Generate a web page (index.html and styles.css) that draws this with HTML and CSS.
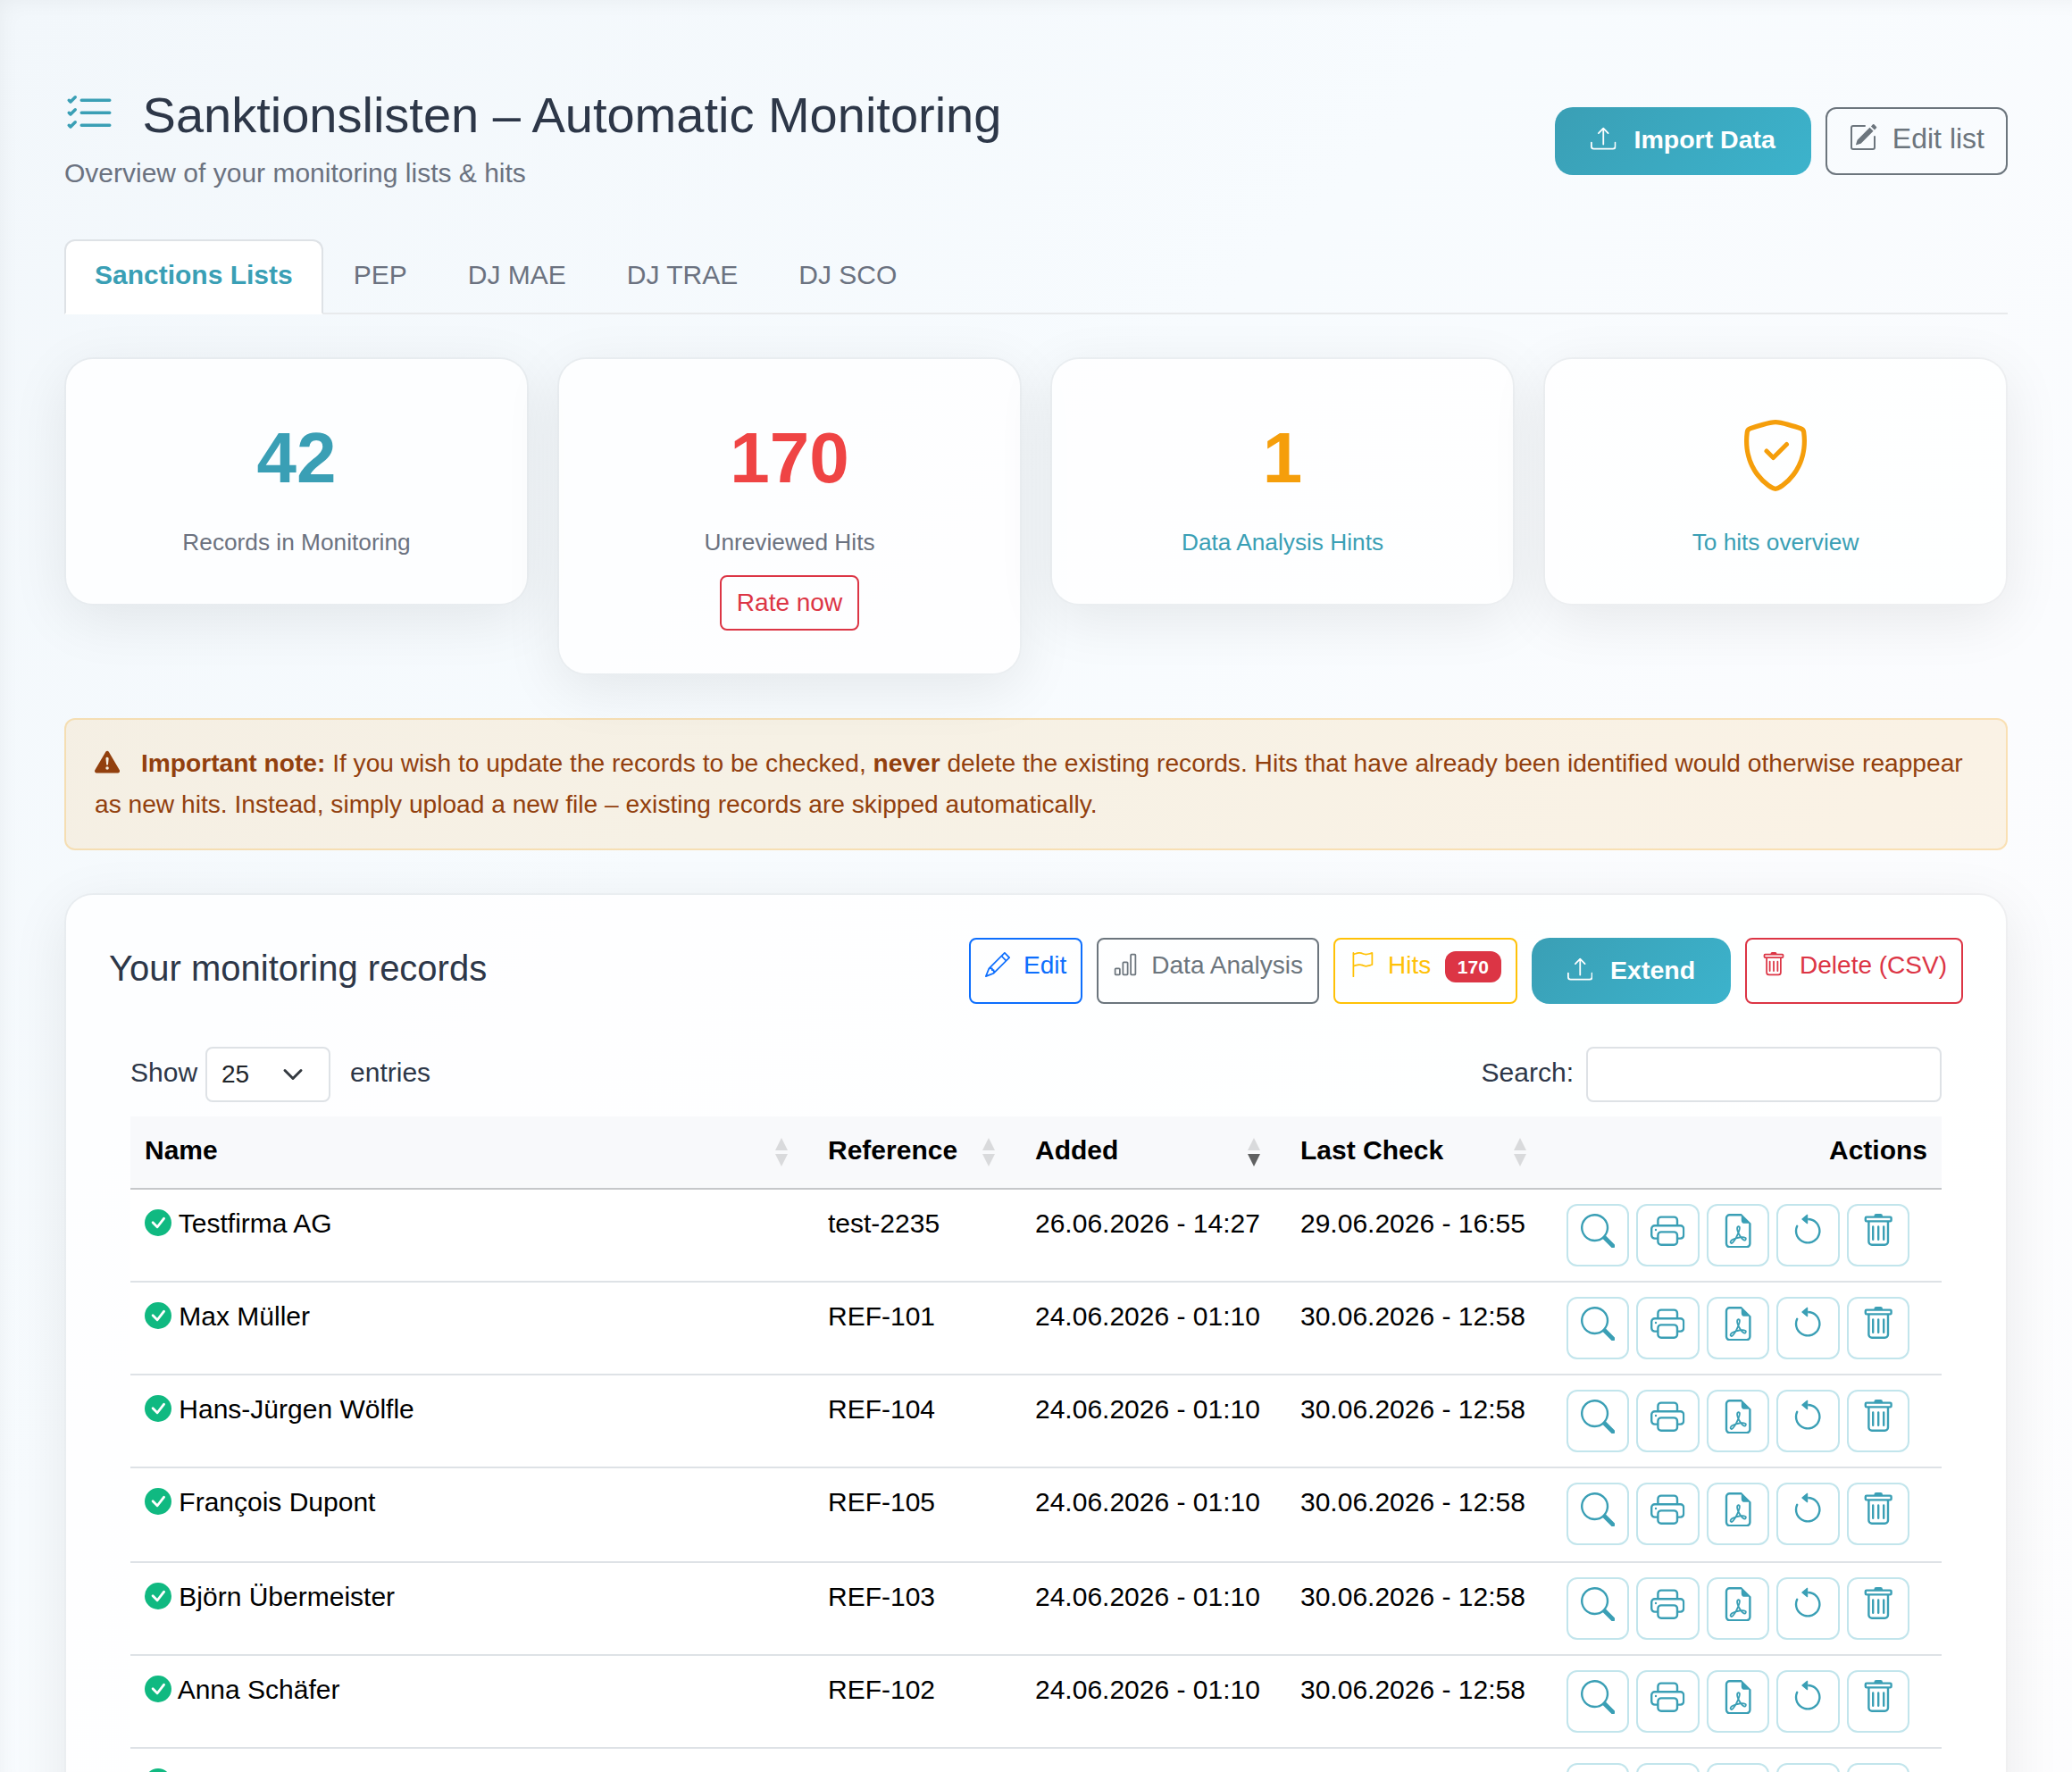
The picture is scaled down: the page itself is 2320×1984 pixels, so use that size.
FILE: index.html
```html
<!DOCTYPE html>
<html lang="en">
<head>
  <meta charset="UTF-8">
  <meta name="viewport" content="width=device-width, initial-scale=1">
  <title>Sanktionslisten – Automatic Monitoring</title>
  <link rel="stylesheet" href="styles.css">
</head>
<body>

<svg class="sprite" xmlns="http://www.w3.org/2000/svg">
  <symbol id="list-check" viewBox="0 0 16 16"><path fill-rule="evenodd" d="M5 11.5a.5.5 0 0 1 .5-.5h9a.5.5 0 0 1 0 1h-9a.5.5 0 0 1-.5-.5m0-4a.5.5 0 0 1 .5-.5h9a.5.5 0 0 1 0 1h-9a.5.5 0 0 1-.5-.5m0-4a.5.5 0 0 1 .5-.5h9a.5.5 0 0 1 0 1h-9a.5.5 0 0 1-.5-.5M3.854 2.146a.5.5 0 0 1 0 .708l-1.5 1.5a.5.5 0 0 1-.708 0l-.5-.5a.5.5 0 1 1 .708-.708L2 3.293l1.146-1.147a.5.5 0 0 1 .708 0m0 4a.5.5 0 0 1 0 .708l-1.5 1.5a.5.5 0 0 1-.708 0l-.5-.5a.5.5 0 1 1 .708-.708L2 7.293l1.146-1.147a.5.5 0 0 1 .708 0m0 4a.5.5 0 0 1 0 .708l-1.5 1.5a.5.5 0 0 1-.708 0l-.5-.5a.5.5 0 0 1 .708-.708l.146.147 1.146-1.147a.5.5 0 0 1 .708 0"/></symbol>
  <symbol id="upload" viewBox="0 0 16 16"><path d="M.5 9.9a.5.5 0 0 1 .5.5v2.5a1 1 0 0 0 1 1h12a1 1 0 0 0 1-1v-2.5a.5.5 0 0 1 1 0v2.5a2 2 0 0 1-2 2H2a2 2 0 0 1-2-2v-2.5a.5.5 0 0 1 .5-.5"/><path d="M7.646 1.146a.5.5 0 0 1 .708 0l3 3a.5.5 0 0 1-.708.708L8.5 2.707V11.5a.5.5 0 0 1-1 0V2.707L5.354 4.854a.5.5 0 1 1-.708-.708z"/></symbol>
  <symbol id="pencil-square" viewBox="0 0 16 16"><path d="M15.502 1.94a.5.5 0 0 1 0 .706L14.459 3.69l-2-2L13.502.646a.5.5 0 0 1 .707 0l1.293 1.293zm-1.75 2.456-2-2L4.939 9.21a.5.5 0 0 0-.121.196l-.805 2.414a.25.25 0 0 0 .316.316l2.414-.805a.5.5 0 0 0 .196-.12l6.813-6.814z"/><path fill-rule="evenodd" d="M1 13.5A1.5 1.5 0 0 0 2.5 15h11a1.5 1.5 0 0 0 1.5-1.5v-6a.5.5 0 0 0-1 0v6a.5.5 0 0 1-.5.5h-11a.5.5 0 0 1-.5-.5v-11a.5.5 0 0 1 .5-.5H9a.5.5 0 0 0 0-1H2.5A1.5 1.5 0 0 0 1 2.5z"/></symbol>
  <symbol id="pencil" viewBox="0 0 16 16"><path d="M12.146.146a.5.5 0 0 1 .708 0l3 3a.5.5 0 0 1 0 .708l-10 10a.5.5 0 0 1-.168.11l-5 2a.5.5 0 0 1-.65-.65l2-5a.5.5 0 0 1 .11-.168zM11.207 2.5 13.5 4.793 14.793 3.5 12.5 1.207zm1.586 3L10.5 3.207 4 9.707V10h.5a.5.5 0 0 1 .5.5v.5h.5a.5.5 0 0 1 .5.5v.5h.293zm-9.761 5.175-.106.106-1.528 3.821 3.821-1.528.106-.106A.5.5 0 0 1 5 12.5V12h-.5a.5.5 0 0 1-.5-.5V11h-.5a.5.5 0 0 1-.468-.325"/></symbol>
  <symbol id="bar-chart" viewBox="0 0 16 16"><path d="M4 11H2v3h2zm5-4H7v7h2zm5-5v12h-2V2zm-2-1a1 1 0 0 0-1 1v12a1 1 0 0 0 1 1h2a1 1 0 0 0 1-1V2a1 1 0 0 0-1-1zM6 7a1 1 0 0 1 1-1h2a1 1 0 0 1 1 1v7a1 1 0 0 1-1 1H7a1 1 0 0 1-1-1zm-5 4a1 1 0 0 1 1-1h2a1 1 0 0 1 1 1v3a1 1 0 0 1-1 1H2a1 1 0 0 1-1-1z"/></symbol>
  <symbol id="flag" viewBox="0 0 16 16"><path d="M14.778.085A.5.5 0 0 1 15 .5V8a.5.5 0 0 1-.314.464L14.5 8l.186.464-.003.001-.006.003-.023.009a12 12 0 0 1-.397.15c-.264.095-.631.223-1.047.35-.816.252-1.879.523-2.71.523-.847 0-1.548-.28-2.158-.525l-.028-.01C7.68 8.71 7.14 8.5 6.5 8.5c-.7 0-1.638.23-2.437.477A20 20 0 0 0 3 9.342V15.5a.5.5 0 0 1-1 0V.5a.5.5 0 0 1 1 0v.282c.226-.079.496-.17.79-.26C4.606.272 5.67 0 6.5 0c.84 0 1.524.277 2.121.519l.043.018C9.286.788 9.828 1 10.5 1c.7 0 1.638-.23 2.437-.477a20 20 0 0 0 1.349-.476l.019-.007.004-.002h.001M14 1.221c-.22.078-.48.167-.766.255-.81.252-1.872.523-2.734.523-.886 0-1.592-.286-2.203-.534l-.008-.003C7.662 1.21 7.139 1 6.5 1c-.669 0-1.606.229-2.415.478A21 21 0 0 0 3 1.845v6.433c.22-.078.48-.167.766-.255C4.576 7.77 5.638 7.5 6.5 7.5c.847 0 1.548.28 2.158.525l.028.01C9.32 8.29 9.86 8.5 10.5 8.5c.668 0 1.606-.229 2.415-.478A21 21 0 0 0 14 7.655V1.222z"/></symbol>
  <symbol id="trash" viewBox="0 0 16 16"><path d="M5.5 5.5A.5.5 0 0 1 6 6v6a.5.5 0 0 1-1 0V6a.5.5 0 0 1 .5-.5m2.5 0a.5.5 0 0 1 .5.5v6a.5.5 0 0 1-1 0V6a.5.5 0 0 1 .5-.5m3 .5a.5.5 0 0 0-1 0v6a.5.5 0 0 0 1 0z"/><path d="M14.5 3a1 1 0 0 1-1 1H13v9a2 2 0 0 1-2 2H5a2 2 0 0 1-2-2V4h-.5a1 1 0 0 1-1-1V2a1 1 0 0 1 1-1H6a1 1 0 0 1 1-1h2a1 1 0 0 1 1 1h3.5a1 1 0 0 1 1 1zM4.118 4 4 4.059V13a1 1 0 0 0 1 1h6a1 1 0 0 0 1-1V4.059L11.882 4zM2.5 3h11V2h-11z"/></symbol>
  <symbol id="shield-check" viewBox="0 0 16 16"><path d="M5.338 1.59a61 61 0 0 0-2.837.856.48.48 0 0 0-.328.39c-.554 4.157.726 7.19 2.253 9.188a10.7 10.7 0 0 0 2.287 2.233c.346.244.652.42.893.533q.18.085.293.118a1 1 0 0 0 .101.025 1 1 0 0 0 .1-.025q.114-.034.294-.118c.24-.113.547-.29.893-.533a10.7 10.7 0 0 0 2.287-2.233c1.527-1.997 2.807-5.031 2.253-9.188a.48.48 0 0 0-.328-.39c-.651-.213-1.75-.56-2.837-.855C9.552 1.29 8.531 1.067 8 1.067c-.53 0-1.552.223-2.662.524zM5.072.56C6.157.265 7.31 0 8 0s1.843.265 2.928.56c1.11.3 2.229.655 2.887.87a1.54 1.54 0 0 1 1.044 1.262c.596 4.477-.787 7.795-2.465 9.99a11.8 11.8 0 0 1-2.517 2.453 7 7 0 0 1-1.048.625c-.28.132-.581.24-.829.24s-.548-.108-.829-.24a7 7 0 0 1-1.048-.625 11.8 11.8 0 0 1-2.517-2.453C1.928 10.487.545 7.169 1.141 2.692A1.54 1.54 0 0 1 2.185 1.43 63 63 0 0 1 5.072.56"/><path d="M10.854 5.146a.5.5 0 0 1 0 .708l-3 3a.5.5 0 0 1-.708 0l-1.5-1.5a.5.5 0 1 1 .708-.708L7.5 7.793l2.646-2.647a.5.5 0 0 1 .708 0"/></symbol>
  <symbol id="warning" viewBox="0 0 16 16"><path d="M8.982 1.566a1.13 1.13 0 0 0-1.96 0L.165 13.233c-.457.778.091 1.767.98 1.767h13.713c.889 0 1.438-.99.98-1.767zM8 5c.535 0 .954.462.9.995l-.35 3.507a.552.552 0 0 1-1.1 0L7.1 5.995A.905.905 0 0 1 8 5m.002 6a1 1 0 1 1 0 2 1 1 0 0 1 0-2"/></symbol>
  <symbol id="check-circle" viewBox="0 0 16 16"><path d="M16 8A8 8 0 1 1 0 8a8 8 0 0 1 16 0m-3.97-3.03a.75.75 0 0 0-1.08.022L7.477 9.417 5.384 7.323a.75.75 0 0 0-1.06 1.06L6.97 11.03a.75.75 0 0 0 1.079-.02l3.992-4.99a.75.75 0 0 0-.01-1.05z"/></symbol>
  <symbol id="search" viewBox="0 0 16 16"><path d="M11.742 10.344a6.5 6.5 0 1 0-1.397 1.398h-.001q.044.06.098.115l3.85 3.85a1 1 0 0 0 1.415-1.414l-3.85-3.85a1 1 0 0 0-.115-.1zM12 6.5a5.5 5.5 0 1 1-11 0 5.5 5.5 0 0 1 11 0"/></symbol>
  <symbol id="printer" viewBox="0 0 16 16"><path d="M2.5 8a.5.5 0 1 0 0-1 .5.5 0 0 0 0 1"/><path d="M5 1a2 2 0 0 0-2 2v2H2a2 2 0 0 0-2 2v3a2 2 0 0 0 2 2h1v1a2 2 0 0 0 2 2h6a2 2 0 0 0 2-2v-1h1a2 2 0 0 0 2-2V7a2 2 0 0 0-2-2h-1V3a2 2 0 0 0-2-2zM4 3a1 1 0 0 1 1-1h6a1 1 0 0 1 1 1v2H4zm1 5a2 2 0 0 0-2 2v1H2a1 1 0 0 1-1-1V7a1 1 0 0 1 1-1h12a1 1 0 0 1 1 1v3a1 1 0 0 1-1 1h-1v-1a2 2 0 0 0-2-2zm7 2v3a1 1 0 0 1-1 1H5a1 1 0 0 1-1-1v-3a1 1 0 0 1 1-1h6a1 1 0 0 1 1 1"/></symbol>
  <symbol id="pdf" viewBox="0 0 16 16"><path d="M14 14V4.5L9.5 0H4a2 2 0 0 0-2 2v12a2 2 0 0 0 2 2h8a2 2 0 0 0 2-2M9.5 3A1.5 1.5 0 0 0 11 4.5h2V14a1 1 0 0 1-1 1H4a1 1 0 0 1-1-1V2a1 1 0 0 1 1-1h5.5z"/><path d="M4.603 14.087a.8.8 0 0 1-.438-.42c-.195-.388-.13-.776.08-1.102.198-.307.526-.568.897-.787a7.7 7.7 0 0 1 1.482-.645 20 20 0 0 0 1.062-2.227 7.3 7.3 0 0 1-.43-1.295c-.086-.4-.119-.796-.046-1.136.075-.354.274-.672.65-.823.192-.077.4-.12.602-.077a.7.7 0 0 1 .477.365c.088.164.12.356.127.538.007.188-.012.396-.047.614-.084.51-.27 1.134-.52 1.794a11 11 0 0 0 .98 1.686 5.8 5.8 0 0 1 1.334.05c.364.066.734.195.96.465.12.144.193.32.2.518.007.192-.047.382-.138.563a1.04 1.04 0 0 1-.354.416.86.86 0 0 1-.51.138c-.331-.014-.654-.196-.933-.417a5.7 5.7 0 0 1-.911-.95 11.7 11.7 0 0 0-1.997.406 11.3 11.3 0 0 1-1.02 1.51c-.292.35-.609.656-.927.787a.8.8 0 0 1-.58.029m1.379-1.901q-.25.115-.459.238c-.328.194-.541.383-.647.547-.094.145-.096.25-.04.361q.016.032.026.044l.035-.012c.137-.056.355-.235.635-.572a8 8 0 0 0 .45-.606m1.64-1.33a13 13 0 0 1 1.01-.193 12 12 0 0 1-.51-.858 21 21 0 0 1-.5 1.05zm2.446.45q.226.245.435.41c.24.19.407.253.498.256a.1.1 0 0 0 .07-.015.3.3 0 0 0 .094-.125.44.44 0 0 0 .059-.2.1.1 0 0 0-.026-.063c-.052-.062-.2-.152-.518-.209a4 4 0 0 0-.612-.053zM8.078 7.8a7 7 0 0 0 .2-.828q.046-.282.038-.465a.6.6 0 0 0-.032-.198.5.5 0 0 0-.145.04c-.087.035-.158.106-.196.283-.04.192-.03.469.046.822q.036.167.09.346z"/></symbol>
  <symbol id="reset" viewBox="0 0 16 16"><path fill-rule="evenodd" d="M8 3a5 5 0 1 1-4.546 2.914.5.5 0 0 0-.908-.417A6 6 0 1 0 8 2z"/><path d="M8 4.466V.534a.25.25 0 0 0-.41-.192L5.23 2.308a.25.25 0 0 0 0 .384l2.36 1.966A.25.25 0 0 0 8 4.466"/></symbol>
</svg>

<main class="page">

  <header class="page-header">
    <div>
      <h1><svg class="icon title-icon"><use href="#list-check"/></svg> Sanktionslisten – Automatic Monitoring</h1>
      <p class="subtitle">Overview of your monitoring lists &amp; hits</p>
    </div>
    <div class="btn-row">
      <a class="btn btn-main"><svg class="icon"><use href="#upload"/></svg>Import Data</a>
      <a class="btn btn-edit-list"><svg class="icon"><use href="#pencil-square"/></svg>Edit list</a>
    </div>
  </header>

  <nav class="tabs">
    <a class="tab active">Sanctions Lists</a>
    <a class="tab">PEP</a>
    <a class="tab">DJ MAE</a>
    <a class="tab">DJ TRAE</a>
    <a class="tab">DJ SCO</a>
  </nav>

  <section class="stats">
    <div class="card stat">
      <div class="stat-number teal">42</div>
      <div class="stat-label">Records in Monitoring</div>
    </div>
    <div class="card stat">
      <div class="stat-number red">170</div>
      <div class="stat-label">Unreviewed Hits</div>
      <a class="btn btn-sm btn-red rate-btn">Rate now</a>
    </div>
    <div class="card stat">
      <div class="stat-number amber">1</div>
      <div class="stat-label teal">Data Analysis Hints</div>
    </div>
    <div class="card stat">
      <div class="stat-number amber"><svg class="icon"><use href="#shield-check"/></svg></div>
      <div class="stat-label teal">To hits overview</div>
    </div>
  </section>

  <div class="note">
    <svg class="icon"><use href="#warning"/></svg>
    <strong>Important note:</strong> If you wish to update the records to be checked, <strong>never</strong> delete the existing records. Hits that have already been identified would otherwise reappear as new hits. Instead, simply upload a new file – existing records are skipped automatically.
  </div>

  <section class="card records">
    <div class="records-header">
      <h2>Your monitoring records</h2>
      <div class="btn-row">
        <a class="btn btn-sm btn-blue"><svg class="icon"><use href="#pencil"/></svg>Edit</a>
        <a class="btn btn-sm btn-gray"><svg class="icon"><use href="#bar-chart"/></svg>Data Analysis</a>
        <a class="btn btn-sm btn-yellow"><svg class="icon"><use href="#flag"/></svg>Hits<span class="badge">170</span></a>
        <a class="btn btn-main"><svg class="icon"><use href="#upload"/></svg>Extend</a>
        <a class="btn btn-sm btn-red"><svg class="icon"><use href="#trash"/></svg>Delete (CSV)</a>
      </div>
    </div>

    <div class="table-wrap">
      <div class="table-controls">
        <label class="length">Show
          <span class="select">25<svg class="caret" viewBox="0 0 16 16"><path d="m2 5 6 6 6-6"/></svg></span>
          entries</label>
        <label class="filter">Search: <input type="search"></label>
      </div>

      <table>
        <colgroup>
          <col class="col-name"><col class="col-ref"><col class="col-added"><col class="col-check"><col>
        </colgroup>
        <thead>
          <tr>
            <th><div class="head">Name<span class="sort"></span></div></th>
            <th><div class="head">Reference<span class="sort"></span></div></th>
            <th><div class="head">Added<span class="sort desc"></span></div></th>
            <th><div class="head">Last Check<span class="sort"></span></div></th>
            <th class="right">Actions</th>
          </tr>
        </thead>
        <tbody id="rows"></tbody>
      </table>
    </div>
  </section>

</main>

<script>
  const records = [
    ["Testfirma AG", "test-2235", "26.06.2026 - 14:27", "29.06.2026 - 16:55"],
    ["Max Müller", "REF-101", "24.06.2026 - 01:10", "30.06.2026 - 12:58"],
    ["Hans-Jürgen Wölfle", "REF-104", "24.06.2026 - 01:10", "30.06.2026 - 12:58"],
    ["François Dupont", "REF-105", "24.06.2026 - 01:10", "30.06.2026 - 12:58"],
    ["Björn Übermeister", "REF-103", "24.06.2026 - 01:10", "30.06.2026 - 12:58"],
    ["Anna Schäfer", "REF-102", "24.06.2026 - 01:10", "30.06.2026 - 12:58"],
    ["", "", "", ""]
  ];
  const icon = name => `<svg class="icon"><use href="#${name}"/></svg>`;
  const actions = ["search", "printer", "pdf", "reset", "trash"]
    .map(name => `<a class="action">${icon(name)}</a>`).join("");

  document.getElementById("rows").innerHTML = records.map(([name, ref, added, checked]) => `
    <tr>
      <td><span class="ok">${icon("check-circle")}</span> ${name}</td>
      <td>${ref}</td>
      <td>${added}</td>
      <td>${checked}</td>
      <td><div class="actions">${actions}</div></td>
    </tr>`).join("");
</script>

</body>
</html>
```
FILE: styles.css
```css
* {
  box-sizing: border-box;
}

body {
  margin: 0;
  height: 100vh;
  overflow: hidden;
  font-family: "Liberation Sans", Arial, sans-serif;
  font-size: 30px;
  line-height: 1.5;
  color: #2d3748;
  background: linear-gradient(135deg, #f2f7fb 0%, #f7fbfe 40%, #fbfcfe 70%, #fdfdfe 100%);
}

.sprite {
  display: none;
}

.icon {
  width: 1em;
  height: 1em;
  fill: currentColor;
  vertical-align: -.125em;
}

.page {
  height: 100vh;
  padding: 95px 72px 0;
  overflow: hidden;
  box-shadow: inset 12px 12px 24px -12px rgba(0, 0, 0, .05);
}

h1, h2, p {
  margin: 0;
  font-weight: normal;
}

.page-header {
  display: flex;
  justify-content: space-between;
  align-items: flex-start;
  height: 126px;
}

.page-header .btn-row {
  margin-top: 25px;
}

h1 {
  font-size: 56px;
  line-height: 67px;
}

.title-icon {
  margin-right: 16px;
  vertical-align: -8px;
  color: #3a9fb5;
}

.subtitle {
  margin-top: 9px;
  color: #6b7280;
}

.btn-row {
  display: flex;
  gap: 16px;
}

.btn {
  display: inline-block;
  border: 2px solid transparent;
  border-radius: 12px;
  white-space: nowrap;
}

.btn .icon {
  margin-right: 15px;
}

.btn-main {
  height: 74px;
  padding: 15px 40px;
  border: 0;
  border-radius: 20px;
  font-size: 28.5px;
  line-height: 43px;
  font-weight: bold;
  color: #fff;
  background: linear-gradient(135deg, #3a9fb5, #3cb3cc);
}

.page-header .btn-main {
  height: 76px;
}

.btn.btn-main .icon {
  margin-right: 20px;
}

.btn-edit-list {
  padding: 12px 24px;
  font-size: 32px;
  line-height: 42px;
  color: #6c757d;
  border-color: #6c757d;
}

.btn.btn-edit-list .icon {
  margin-right: 17px;
}

.btn-sm {
  padding: 8px 16px;
  border-radius: 8px;
  font-size: 28px;
}

.btn-blue { color: #0d6efd; border-color: #0d6efd; }
.btn-gray { color: #6c757d; border-color: #6c757d; }
.btn-yellow { color: #ffc107; border-color: #ffc107; }
.btn-red { color: #dc3545; border-color: #dc3545; }

.badge {
  display: inline-block;
  margin-left: 16px;
  padding: 7px 13.65px;
  border-radius: 12px;
  font-size: 21px;
  line-height: 21px;
  font-weight: bold;
  color: #fff;
  background: #dc3545;
}

.teal { color: #3a9fb5; }
.red { color: #ef4444; }
.amber { color: #f59e0b; }

.tabs {
  display: flex;
  height: 84px;
  margin-top: 47px;
  border-bottom: 2px solid #e8eaec;
}

.tab {
  padding: 15px 32px;
  height: 84px;
  border: 2px solid transparent;
  color: #6b7280;
}

.tab.active {
  border-color: #dee2e6 #dee2e6 #fff;
  border-radius: 12px 12px 0 0;
  font-weight: bold;
  color: #3a9fb5;
  background: #fff;
}

.card {
  border: 2px solid rgba(0, 0, 0, .05);
  border-radius: 32px;
  background: rgba(255, 255, 255, .8);
  background-clip: padding-box;
  box-shadow: 0 16px 64px rgba(0, 0, 0, .08);
}

.stats {
  display: grid;
  grid-template-columns: repeat(4, 1fr);
  align-items: start;
  gap: 32px;
  margin-top: 48px;
}

.stat {
  padding: 46px 46px 48px;
  text-align: center;
}

.stat-number {
  height: 120px;
  font-size: 80px;
  line-height: 129px;
  font-weight: bold;
}

.stat-label {
  margin-top: 17px;
  height: 43px;
  font-size: 26.25px;
  line-height: 44px;
}

.stat-label:not(.teal) {
  color: #6b7280;
}

.rate-btn {
  display: block;
  width: fit-content;
  margin: 16px auto 0;
  padding: 8px 17px;
}

.note {
  margin-top: 48px;
  padding: 26px 32px;
  height: 148px;
  border: 2px solid rgba(245, 158, 11, .3);
  border-radius: 12px;
  font-size: 28.15px;
  line-height: 46px;
  color: #92400e;
  background: rgba(245, 158, 11, .1);
  background-clip: padding-box;
}

.note .icon {
  margin-right: 16px;
}

.records {
  height: 1200px;
  margin-top: 48px;
  padding: 48px;
}

.records-header {
  display: flex;
  justify-content: space-between;
}

h2 {
  font-size: 40px;
  line-height: 68px;
}

.table-wrap {
  margin-top: 48px;
  padding: 0 24px;
}

.table-controls {
  display: flex;
  justify-content: space-between;
  height: 78px;
}

.length, .filter {
  display: flex;
  align-items: center;
  height: 62px;
  line-height: 42px;
}

.length, .filter {
  align-items: flex-start;
  padding-top: 8px;
}

.select {
  display: flex;
  align-items: center;
  justify-content: space-between;
  width: 140px;
  height: 62px;
  margin: -8px 22px 0 9px;
  padding: 0 28px 0 16px;
  border: 2px solid #dee2e6;
  border-radius: 8px;
  font-size: 28px;
  color: #212529;
  background: #fff;
}

.caret {
  width: 24px;
  height: 24px;
  fill: none;
  stroke: #343a40;
  stroke-width: 2;
  stroke-linecap: round;
  stroke-linejoin: round;
}

.filter input {
  width: 398px;
  height: 62px;
  margin: -8px 0 0 14px;
  border: 2px solid #dee2e6;
  border-radius: 8px;
  background: #fff;
}

table {
  width: 100%;
  table-layout: fixed;
  border-collapse: separate;
  border-spacing: 0;
  color: #000;
}

.col-name { width: 765px; }
.col-ref { width: 232px; }
.col-added { width: 297px; }
.col-check { width: 298px; }

th {
  height: 82px;
  padding: 15px 16px 0;
  border-bottom: 2px solid #c5c7ca;
  text-align: left;
  vertical-align: top;
  background: #f8f9fb;
}

th.right {
  text-align: right;
}

.head {
  display: flex;
  justify-content: space-between;
}

/* up and down triangles, the active direction is dark */
.sort {
  width: 14px;
  height: 32px;
  margin: 9px 13px 0 0;
}

.sort::before, .sort::after {
  content: "";
  display: block;
  border: 7px solid transparent;
  border-top-width: 0;
  border-bottom: 14px solid #d9dadc;
}

.sort::after {
  margin-top: 4px;
  border-top: 14px solid #d9dadc;
  border-bottom-width: 0;
}

.sort.desc::after {
  border-top-color: #606162;
}

td {
  height: 104px;
  padding: 15px 16px 0;
  border-bottom: 2px solid #dee2e6;
  vertical-align: top;
  background: #fff;
}

tr:nth-child(4) td {
  height: 106px;
}

.ok {
  color: #10b981;
}

.actions {
  display: flex;
  gap: 8px;
  margin-top: 1px;
}

.action {
  width: 70.4px;
  height: 70px;
  padding: 11px 14px;
  border: 2px solid #c2e5ec;
  border-radius: 12px;
  font-size: 38.4px;
  line-height: 0;
  color: #3a9fb5;
}

.action .icon {
  display: block;
  margin-top: -2px;
}
```
